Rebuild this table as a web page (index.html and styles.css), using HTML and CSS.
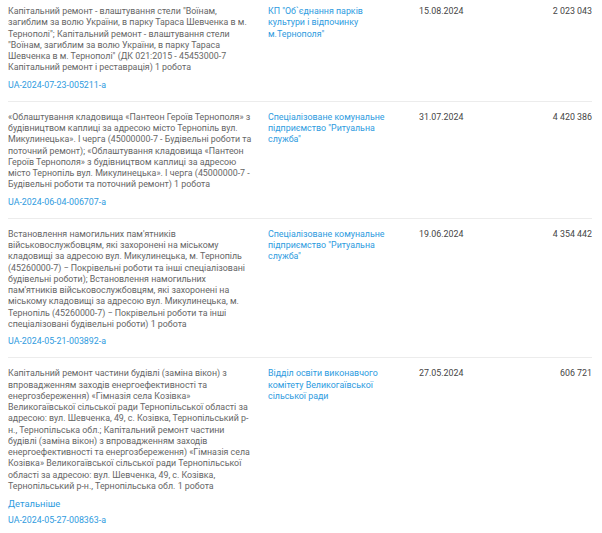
FILE: index.html
```html
<!DOCTYPE html>
<html lang="uk">
<head>
<meta charset="utf-8">
<link rel="stylesheet" href="styles.css">
</head>
<body>
<div class="list">
  <div class="row first">
    <div class="c-desc">
      <p class="desc">Капітальний ремонт - влаштування стели "Воїнам, загиблим за волю України, в парку Тараса Шевченка в м. Тернополі"; Капітальний ремонт - влаштування стели "Воїнам, загиблим за волю України, в парку Тараса Шевченка в м. Тернополі" (ДК 021:2015 - 45453000-7 Капітальний ремонт і реставрація) 1 робота</p>
      <a class="link" href="#">UA-2024-07-23-005211-a</a>
    </div>
    <div class="c-org"><a class="link" href="#">КП "Об`єднання парків культури і відпочинку м.Тернополя"</a></div>
    <div class="c-date">15.08.2024</div>
    <div class="c-sum">2 023 043</div>
  </div>
  <div class="row">
    <div class="c-desc">
      <p class="desc">«Облаштування кладовища «Пантеон Героїв Тернополя» з будівництвом каплиці за адресою місто Тернопіль вул. Микулинецька». І черга (45000000-7 - Будівельні роботи та поточний ремонт); «Облаштування кладовища «Пантеон Героїв Тернополя» з будівництвом каплиці за адресою місто Тернопіль вул. Микулинецька». І черга (45000000-7 - Будівельні роботи та поточний ремонт) 1 робота</p>
      <a class="link" href="#">UA-2024-06-04-006707-a</a>
    </div>
    <div class="c-org"><a class="link" href="#">Спеціалізоване комунальне підприємство "Ритуальна служба"</a></div>
    <div class="c-date">31.07.2024</div>
    <div class="c-sum">4 420 386</div>
  </div>
  <div class="row">
    <div class="c-desc">
      <p class="desc">Встановлення намогильних пам'ятників військовослужбовцям, які захоронені на міському кладовищі за адресою вул. Микулинецька, м. Тернопіль (45260000-7) − Покрівельні роботи та інші спеціалізовані будівельні роботи); Встановлення намогильних пам'ятників військовослужбовцям, які захоронені на міському кладовищі за адресою вул. Микулинецька, м. Тернопіль (45260000-7) − Покрівельні роботи та інші спеціалізовані будівельні роботи) 1 робота</p>
      <a class="link" href="#">UA-2024-05-21-003892-a</a>
    </div>
    <div class="c-org"><a class="link" href="#">Спеціалізоване комунальне підприємство "Ритуальна служба"</a></div>
    <div class="c-date">19.06.2024</div>
    <div class="c-sum">4 354 442</div>
  </div>
  <div class="row">
    <div class="c-desc">
      <p class="desc">Капітальний ремонт частини будівлі (заміна вікон) з впровадженням заходів енергоефективності та енергозбереження) «Гімназія села Козівка» Великогаївської сільської ради Тернопільської області за адресою: вул. Шевченка, 49, с. Козівка, Тернопільський р-н., Тернопільська обл.; Капітальний ремонт частини будівлі (заміна вікон) з впровадженням заходів енергоефективності та енергозбереження) «Гімназія села Козівка» Великогаївської сільської ради Тернопільської області за адресою: вул. Шевченка, 49, с. Козівка, Тернопільський р-н., Тернопільська обл. 1 робота</p>
      <a class="link more" href="#">Детальніше</a>
      <a class="link" href="#">UA-2024-05-27-008363-a</a>
    </div>
    <div class="c-org"><a class="link" href="#">Відділ освіти виконавчого комітету Великогаївської сільської ради</a></div>
    <div class="c-date">27.05.2024</div>
    <div class="c-sum">606 721</div>
  </div>
</div>
</body>
</html>
```

FILE: styles.css
```css
html, body {
  margin: 0;
  padding: 0;
  background: #ffffff;
}

body {
  font-family: Roboto, "Noto Sans", sans-serif;
  font-size: 8.85px;
  line-height: 11.25px;
  color: #666666;
}

.list {
  padding: 0 10px 0 8px;
}

.row {
  display: grid;
  grid-template-columns: 260px 151px 1fr auto;
  padding: 10px 0 10px;
  border-bottom: 1px solid #ececec;
}

.row.first {
  padding-top: 6px;
}

.c-desc {
  display: flex;
  flex-direction: column;
  align-items: flex-start;
  gap: 6px;
  padding-right: 14px;
}

.desc {
  margin: 0;
}

.link {
  color: #2e9be0;
  text-decoration: none;
}

.more {
  font-size: 9.4px;
}

.c-org {
  padding-right: 26px;
}

.c-date {
  color: #444444;
}

.c-sum {
  color: #444444;
  text-align: right;
}
```
